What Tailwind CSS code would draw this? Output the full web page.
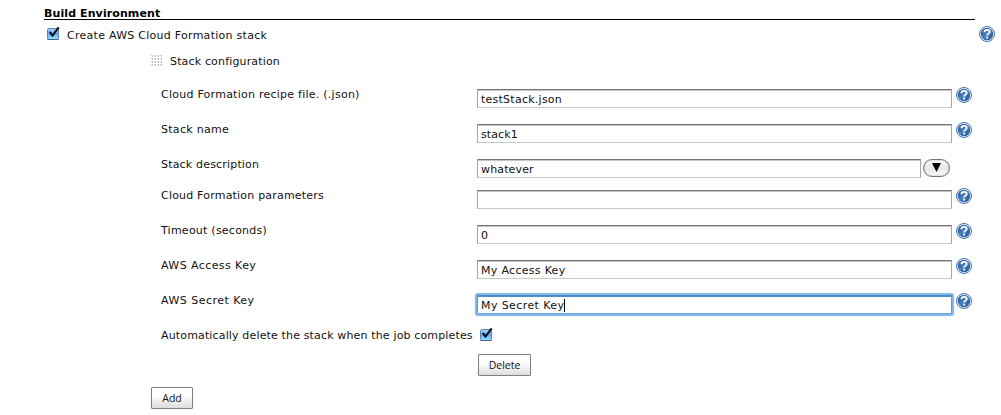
<!DOCTYPE html>
<html lang="en">
<head>
<meta charset="utf-8">
<title>Build Environment</title>
<script src="https://cdn.jsdelivr.net/npm/@tailwindcss/browser@4"></script>
</head>
<body class="bg-white">
<svg class="absolute w-0 h-0">
  <defs>
    <linearGradient id="hg" x1="0" y1="0" x2="1" y2="1"><stop offset="0" stop-color="#1d4f90"/><stop offset=".5" stop-color="#4a80be"/><stop offset="1" stop-color="#1b4b8c"/></linearGradient>
    <linearGradient id="cg" x1="0" y1="0" x2="0" y2="1"><stop offset="0" stop-color="#b5d6f5"/><stop offset=".5" stop-color="#5aa8f4"/><stop offset="1" stop-color="#a5e8ff"/></linearGradient>
    <symbol id="help" viewBox="0 0 16 16">
      <circle cx="8" cy="8" r="7.5" fill="#fff" stroke="#4272ae" stroke-width="1"/>
      <circle cx="8" cy="8" r="6.3" fill="url(#hg)"/>
      <path d="M5.400 6.300C5.400 4.500 6.600 3.900 8.100 3.900s2.600.7 2.600 2C10.700 7.600 8.200 7.700 8.200 9.500" fill="none" stroke="#fff" stroke-width="1.800"/>
      <rect x="7.200" y="10.600" width="2" height="1.900" fill="#fff"/>
    </symbol>
    <symbol id="check" viewBox="0 0 15 15">
      <rect x="1.500" y="2.500" width="11" height="11" rx="1.500" fill="url(#cg)" stroke="#5f86b0"/>
      <path d="M1.500 13.500h11" stroke="#3f6288" stroke-width="1"/>
      <path d="M3.700 5.800 6.500 9.500 12.700 1.300" fill="none" stroke="#080c14" stroke-width="2"/>
    </symbol>
  </defs>
</svg>
<main class="w-[1001px] h-[415px] overflow-hidden font-['DejaVu_Sans',Verdana,sans-serif] text-[11px] leading-[14px] text-[#111] whitespace-nowrap">
  <h1 class="ml-11 w-[931px] h-5 pt-[8px] border-b border-black font-bold text-black leading-3 tracking-[0.1px]"><span>Build Environment</span></h1>
  <div class="flex h-[30px] pl-[46px]">
    <svg class="w-[15px] h-[15px] mt-[6px]"><use href="#check"/></svg>
    <span class="ml-[6px] w-[912px] mt-[9px] tracking-[0.27px]">Create AWS Cloud Formation stack</span>
    <svg class="w-4 h-4 mt-[6px]"><use href="#help"/></svg>
  </div>
  <div class="flex h-[35px] pl-[151px]">
    <svg class="w-[11px] h-[12px] mt-[5px]" viewBox="0 0 11 12"><defs><pattern id="dots" width="3" height="3" patternUnits="userSpaceOnUse"><rect width="2" height="1" fill="#ccc"/><rect x="1" y="1" width="1" height="1" fill="#bbb"/></pattern></defs><rect width="11" height="11" fill="url(#dots)"/></svg>
    <span class="ml-2 mt-[5px] tracking-[0.16px]">Stack configuration</span>
  </div>

  <div class="flex h-[35px] pl-[161px]">
    <span class="w-[316px] mt-[3px] tracking-[0.25px]">Cloud Formation recipe file. (.json)</span>
    <div class="w-[475px] h-[19px] mt-1 pl-[3px] pt-[3px] border border-t-[#757575] border-l-[#a5a5a5] border-r-[#a5a5a5] border-b-[#c8c8c8] shadow-[inset_0_1px_0_#c4c4c4] tracking-[0.25px]">testStack.json</div>
    <svg class="w-4 h-4 ml-1 mt-[2px]"><use href="#help"/></svg>
  </div>
  <div class="flex h-[35px] pl-[161px]">
    <span class="w-[316px] mt-[3px] tracking-[0.28px]">Stack name</span>
    <div class="w-[475px] h-[19px] mt-1 pl-[3px] pt-[3px] border border-t-[#757575] border-l-[#a5a5a5] border-r-[#a5a5a5] border-b-[#c8c8c8] shadow-[inset_0_1px_0_#c4c4c4] tracking-[0.1px]">stack1</div>
    <svg class="w-4 h-4 ml-1 mt-[2px]"><use href="#help"/></svg>
  </div>
  <div class="flex h-[31px] pl-[161px]">
    <span class="w-[316px] mt-[3px] tracking-[0.18px]">Stack description</span>
    <div class="w-[444px] h-[19px] mt-1 pl-[3px] pt-[3px] border border-t-[#757575] border-l-[#a5a5a5] border-r-[#a5a5a5] border-b-[#c8c8c8] shadow-[inset_0_1px_0_#c4c4c4] tracking-[0.15px]">whatever</div>
    <div class="ml-[2px] mt-[4px] w-[27px] h-[18px] rounded-[9px] border border-[#777] bg-linear-to-b from-white via-[#e8e8e8] to-[#fafafa] flex justify-center shadow-[inset_0_0_2px_#aaa]">
      <svg class="w-[9px] h-[9px] mt-[3px]" viewBox="0 0 9 9"><path d="M0 0h9L4.500 9z" fill="#000"/></svg>
    </div>
  </div>
  <div class="flex h-[35px] pl-[161px]">
    <span class="w-[316px] mt-[3px] tracking-[0.2px]">Cloud Formation parameters</span>
    <div class="w-[475px] h-[19px] mt-1 border border-t-[#757575] border-l-[#a5a5a5] border-r-[#a5a5a5] border-b-[#c8c8c8] shadow-[inset_0_1px_0_#c4c4c4]"></div>
    <svg class="w-4 h-4 ml-1 mt-[2px]"><use href="#help"/></svg>
  </div>
  <div class="flex h-[35px] pl-[161px]">
    <span class="w-[316px] mt-[3px] tracking-[0.24px]">Timeout (seconds)</span>
    <div class="w-[475px] h-[19px] mt-1 pl-[3px] pt-[3px] border border-t-[#757575] border-l-[#a5a5a5] border-r-[#a5a5a5] border-b-[#c8c8c8] shadow-[inset_0_1px_0_#c4c4c4]">0</div>
    <svg class="w-4 h-4 ml-1 mt-[2px]"><use href="#help"/></svg>
  </div>
  <div class="flex h-[35px] pl-[161px]">
    <span class="w-[316px] mt-[3px] tracking-[0.42px]">AWS Access Key</span>
    <div class="w-[475px] h-[19px] mt-1 pl-[3px] pt-[3px] border border-t-[#757575] border-l-[#a5a5a5] border-r-[#a5a5a5] border-b-[#c8c8c8] shadow-[inset_0_1px_0_#c4c4c4] tracking-[0.3px]">My Access Key</div>
    <svg class="w-4 h-4 ml-1 mt-[2px]"><use href="#help"/></svg>
  </div>
  <div class="flex h-[35px] pl-[161px]">
    <span class="w-[316px] mt-[3px] tracking-[0.48px]">AWS Secret Key</span>
    <div class="w-[475px] h-[19px] mt-1 pl-[3px] pt-[2px] flex border border-t-2 border-t-[#4f8cc6] border-x-[#5a9bd8] border-b-[#6ca9e0] rounded-[1px] shadow-[0_0_1px_2px_#7db5ea] tracking-[0.4px]"><span>My Secret Key</span><i class="w-px h-[13px] bg-black"></i></div>
    <svg class="w-4 h-4 ml-1 mt-[2px]"><use href="#help"/></svg>
  </div>
  <div class="flex h-7 pl-[161px]">
    <span class="w-[318px] mt-[3px] tracking-[0.15px]">Automatically delete the stack when the job completes</span>
    <svg class="w-[15px] h-[15px] mt-[1px]"><use href="#check"/></svg>
  </div>
  <div class="h-[33px] pl-[478px]">
    <div class="w-[53px] h-[22px] border border-[#808080] rounded-[1px] bg-linear-to-b from-white from-40% to-[#dcdcdc] text-center leading-5 text-[10.500px] font-['Open_Sans',sans-serif]">Delete</div>
  </div>
  <div class="pl-[151px]">
    <div class="w-[42px] h-[22px] border border-[#808080] rounded-[1px] bg-linear-to-b from-white from-40% to-[#dcdcdc] text-center leading-5 text-[10.500px] font-['Open_Sans',sans-serif]">Add</div>
  </div>
</main>
</body>
</html>
